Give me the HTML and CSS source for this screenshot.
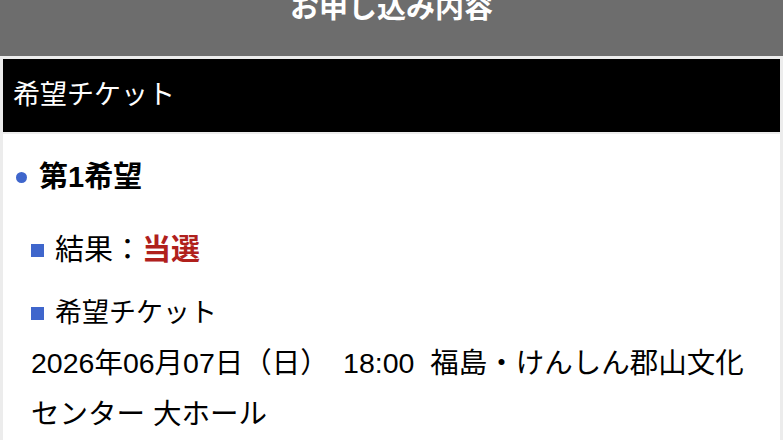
FILE: index.html
```html
<!DOCTYPE html>
<html lang="ja">
<head>
<meta charset="utf-8">
<link rel="stylesheet" href="styles.css">
</head>
<body>
<header class="topbar"><h1 class="page-title">お申し込み内容</h1></header>
<section class="section">
  <h2 class="section-head">希望チケット</h2>
  <div class="panel">
    <h3 class="choice"><span class="dot"></span>第1希望</h3>
    <div class="item item-result">
      <div class="label"><span class="sq"></span>結果：<span class="win">当選</span></div>
    </div>
    <div class="item item-ticket">
      <div class="label label-ticket"><span class="sq"></span>希望チケット</div>
      <p class="value">2026年06月07日（日）　18:00&nbsp;&nbsp;福島・けんしん郡山文化<span class="nobr">センター 大ホール</span></p>
    </div>
  </div>
</section>
</body>
</html>
```
FILE: styles.css
```css
html, body {
  margin: 0;
  padding: 0;
}
body {
  background: #ececec;
  font-family: "Liberation Sans", "Noto Sans CJK JP", sans-serif;
  color: #000;
  overflow: hidden;
}
.topbar {
  background: #6d6d6d;
  height: 56px;
  overflow: hidden;
}
.page-title {
  margin: 0;
  font-size: 29px;
  font-weight: 700;
  color: #fff;
  text-align: center;
  line-height: 16px;
}
.section {
  margin: 3px 3px 0 3px;
}
.section-head {
  margin: 0;
  background: #000;
  color: #fff;
  font-size: 27px;
  font-weight: 400;
  line-height: 73px;
  padding: 0 10px;
}
.panel {
  background: #fff;
  margin-top: 2px;
  padding: 18px 0 20px;
  min-height: 400px;
}
.choice {
  margin: 0;
  display: flex;
  align-items: center;
  font-size: 29px;
  font-weight: 700;
  line-height: 50px;
  padding-left: 13px;
}
.dot {
  width: 11px;
  height: 11px;
  border-radius: 50%;
  background: #3f66cc;
  margin-right: 12px;
}
.item-result {
  margin-top: 23px;
}
.item-ticket {
  margin-top: 13px;
}
.label {
  display: flex;
  align-items: center;
  font-size: 29px;
  line-height: 50px;
  padding-left: 28px;
}
.label-ticket {
  font-size: 27px;
}
.sq {
  width: 13px;
  height: 13px;
  background: #3f66cc;
  margin-right: 11px;
}
.win {
  color: #b0201c;
  font-weight: 700;
}
.value {
  margin: 0;
  font-size: 28.5px;
  line-height: 51px;
  padding: 0 8px 0 28px;
}
.nobr {
  white-space: nowrap;
}
```
